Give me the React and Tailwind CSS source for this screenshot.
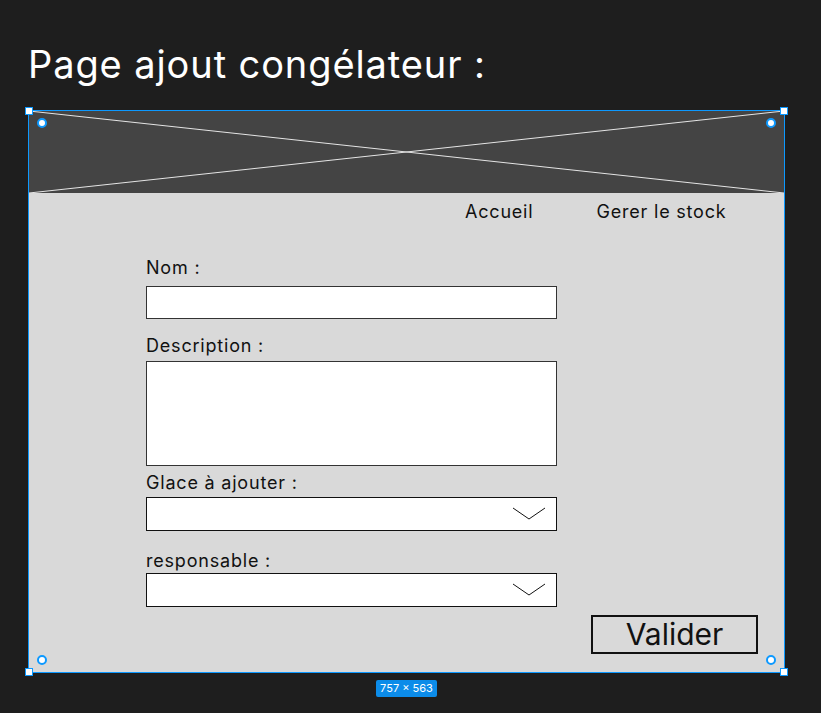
import React from 'react';

const Chevron = () => (
  <svg className="absolute right-[10px] top-[9px]" width="34" height="13" viewBox="0 0 34 13" fill="none">
    <path d="M1 1 L17 12 L33 1" stroke="#111" strokeWidth="1" />
  </svg>
);

const Handle = ({ className }) => (
  <span className={`absolute w-[8px] h-[8px] bg-white border border-[#0d99ff] ${className}`} />
);

const Dot = ({ className }) => (
  <span className={`absolute w-[10px] h-[10px] rounded-full bg-white border-2 border-[#0d99ff] ${className}`} />
);

const Label = ({ children, className = '' }) => (
  <p className={`text-[18px] leading-[22px] tracking-[0.8px] text-[#111] ${className}`}>{children}</p>
);

export default function App() {
  return (
    <div className="w-[821px] h-[713px] bg-[#1e1e1e] overflow-hidden" style={{ fontFamily: 'Inter, "Noto Sans", sans-serif' }}>
      <h1 className="pt-[41px] pl-[28px] text-[38px] leading-[46px] tracking-[0.9px] text-white font-normal">
        Page ajout congélateur :
      </h1>

      <div className="relative ml-[28px] mt-[23px] w-[757px] h-[563px] border border-[#0d99ff] bg-[#d9d9d9] flex flex-col">
        <div className="h-[82px] bg-[#444444]">
          <svg width="755" height="82" viewBox="0 0 755 82" preserveAspectRatio="none">
            <line x1="0" y1="0" x2="755" y2="82" stroke="#e5e5e5" strokeWidth="1" />
            <line x1="0" y1="82" x2="755" y2="0" stroke="#e5e5e5" strokeWidth="1" />
          </svg>
        </div>

        <nav className="flex mt-[8px] pl-[436px] text-[18px] leading-[22px] tracking-[0.8px] text-[#111]">
          <span>Accueil</span>
          <span className="ml-[63px]">Gerer le stock</span>
        </nav>

        <div className="flex flex-col pl-[117px] w-[528px]">
          <Label className="mt-[34px]">Nom :</Label>
          <div className="mt-[7px] h-[33px] bg-white border border-[#333]" />

          <Label className="mt-[16px]">Description :</Label>
          <div className="mt-[4px] h-[105px] bg-white border border-[#333]" />

          <Label className="mt-[6px]">Glace à ajouter :</Label>
          <div className="relative mt-[3px] h-[34px] bg-white border border-[#111]">
            <Chevron />
          </div>

          <Label className="mt-[19px]">responsable :</Label>
          <div className="relative mt-[1px] h-[34px] bg-white border border-[#111]">
            <Chevron />
          </div>
        </div>

        <div className="flex justify-end pr-[26px] mt-[8px]">
          <button className="w-[167px] h-[39px] border-2 border-[#111] text-[30px] leading-[35px] text-[#111]">
            Valider
          </button>
        </div>

        <Handle className="-left-[4px] -top-[4px]" />
        <Handle className="-right-[4px] -top-[4px]" />
        <Handle className="-left-[4px] -bottom-[4px]" />
        <Handle className="-right-[4px] -bottom-[4px]" />
        <Dot className="left-[8px] top-[7px]" />
        <Dot className="right-[8px] top-[7px]" />
        <Dot className="left-[8px] bottom-[7px]" />
        <Dot className="right-[8px] bottom-[7px]" />
      </div>

      <div className="flex justify-center w-[813px] mt-[7px]">
        <span className="bg-[#0c8ce9] rounded-[2px] px-[4px] h-[17px] text-[11px] leading-[17px] text-white">
          757 × 563
        </span>
      </div>
    </div>
  );
}
